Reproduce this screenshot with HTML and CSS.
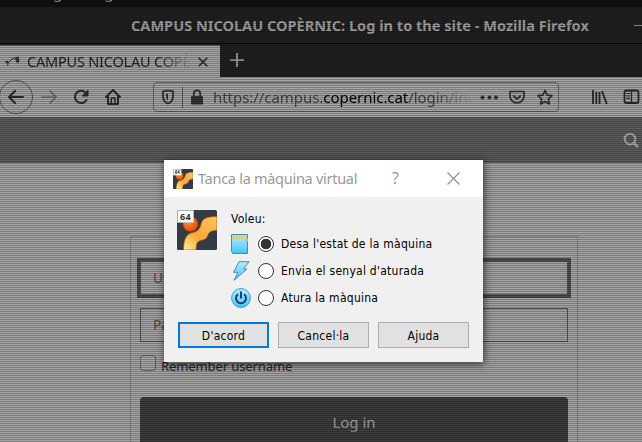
FILE: index.html
```html
<!DOCTYPE html>
<html lang="ca">
<head>
<meta charset="utf-8">
<title>Tanca la màquina virtual</title>
<link rel="stylesheet" href="styles.css">
</head>
<body>
<svg width="0" height="0" class="defs">
  <defs>
    <linearGradient id="orange" x1="0" y1="1" x2="1" y2="0"><stop offset="0" stop-color="#fff0a0"/><stop offset=".4" stop-color="#f9a836"/><stop offset="1" stop-color="#ffc45c"/></linearGradient>
    <radialGradient id="ball" cx=".4" cy=".35" r=".7"><stop offset="0" stop-color="#ff9238"/><stop offset="1" stop-color="#e34400"/></radialGradient>
    <linearGradient id="sky" x1="0" y1="0" x2="0" y2="1"><stop offset="0" stop-color="#b5ecff"/><stop offset="1" stop-color="#4cc4fb"/></linearGradient>
    <symbol id="vm" viewBox="0 0 40 40">
      <rect width="40" height="40" rx="1.5" fill="#353a45"/>
      <circle cx="13.5" cy="14" r="7.5" fill="url(#ball)"/>
      <path d="M6.500 40C6.500 34 7.500 28 11 24.500C14 22 18 23 21 20C25 16 23 12 27 9C30 7 35 6.500 40 6.500V20.500C36 20.500 33 21 31.500 24C30 27 30 29 26 30C22 30.500 20 32 19.500 35C19 37 19.500 38.500 19 40Z" fill="url(#orange)" stroke="#9a4a10" stroke-width=".7"/>
      <rect x=".5" y=".5" width="16" height="12" fill="#fff" stroke="#bbb" stroke-width=".6"/>
      <text x="8.5" y="10" class="bits" text-anchor="middle">64</text>
    </symbol>
  </defs>
</svg>
<div class="screen">
  <div class="topbar"><span>g</span><span>g</span></div>
  <div class="titlebar"><span class="wintitle">CAMPUS NICOLAU COPÈRNIC: Log in to the site - Mozilla Firefox</span><i class="minimize"></i></div>
  <div class="tabs">
    <div class="tab">
      <svg class="favicon" width="18" height="16" viewBox="0 0 18 16" fill="none" stroke="#2c2c2c"><path d="M2 8Q4 6 4 9T3 12M4 9Q7 4 14 3" /><path d="M12 4Q13 9 14 8T14 3" stroke-width="1.6"/><path d="M2 7L3 9" stroke-width="2"/></svg>
      <span class="tabtitle">CAMPUS NICOLAU COPÈ</span>
      <svg class="tabclose" width="10" height="10" viewBox="0 0 10 10" stroke="#2b2b2b" stroke-width="1.6"><path d="M.7.7 9.3 9.3M9.3.7.7 9.3"/></svg>
    </div>
    <svg class="newtab" width="14" height="14" viewBox="0 0 14 14" stroke="#aaa" stroke-width="1.7"><path d="M7 0V14M0 7H14"/></svg>
  </div>
  <div class="toolbar">
    <svg class="navicons" width="130" height="40" viewBox="0 0 130 40" fill="none" stroke="#2b2b2b" stroke-width="2" stroke-linejoin="round" stroke-linecap="round">
      <circle cx="16" cy="20" r="16.5" stroke="#555" stroke-width="1"/>
      <path d="M23 20H9M15 14L9 20L15 26"/>
      <path d="M42 20H56M50 14L56 20L50 26" stroke="#6b6b6b" stroke-width="1.7"/>
      <path d="M86 16A6.2 6.2 0 1 0 86.5 23"/><path d="M88 13.5V19H82.5Z" fill="#2b2b2b" stroke-width="1"/>
      <path d="M106 20L113 13L120 20M108 19V27H118V19" stroke-width="2"/><path d="M111.3 27V21H115V27" stroke-width="1.5"/>
    </svg>
    <div class="urlbar">
      <svg width="60" height="28" viewBox="0 0 60 28" fill="none" stroke="#333" stroke-width="1.8">
        <path d="M9 8.3Q14 7 19 8.3V13Q19 19 14 20.5Q9 19 9 13Z" stroke-linejoin="round"/><path d="M14 10.5Q12 10.5 12 11V13Q12 16 14 17.5Z" fill="#333" stroke="none"/>
        <path d="M28.5 4V25" stroke="#555" stroke-width="1"/>
        <rect x="37" y="13" width="12" height="8.5" rx="1" fill="#333" stroke="none"/><path d="M39.8 13V10.5A3.2 3.2 0 0 1 46.2 10.5V13"/>
      </svg>
      <span class="url"><span class="sub">https://campus.</span><span class="host">copernic.cat</span><span class="path">/login/inc</span></span>
      <svg class="urlactions" width="76" height="28" viewBox="0 0 76 28" fill="none" stroke="#333" stroke-width="1.7" stroke-linejoin="round" stroke-linecap="round">
        <g fill="#333" stroke="none"><circle cx="2.5" cy="14.5" r="2"/><circle cx="9.5" cy="14.5" r="2"/><circle cx="16" cy="14.5" r="2"/></g>
        <path d="M30 8.500H44V13A7 7 0 0 1 30 13ZM33.700 13L37 16L40.300 13"/>
        <path d="M65 7.500L67.100 12.200L72 12.700L68.400 16.100L69.400 21L65 18.500L60.600 21L61.600 16.100L58 12.700L62.900 12.200Z"/>
      </svg>
    </div>
    <svg class="sideicons" width="50" height="40" viewBox="0 0 50 40" fill="none" stroke="#2b2b2b" stroke-width="1.8">
      <path d="M1 13V27M4.300 15V27M7.500 15V27M10 14L14.800 27"/>
      <rect x="32.500" y="13.500" width="14" height="12.500" rx="2"/><path d="M39.500 14V26" stroke-width="1.3"/><path d="M34.500 16.500H38M34.500 19H38M34.500 21.500H38" stroke-width="1"/>
    </svg>
  </div>
  <div class="siteheader">
    <svg width="17" height="17" viewBox="0 0 17 17" fill="none" stroke="#aaa" stroke-width="2"><circle cx="7" cy="7" r="5.300"/><path d="M11 11L15 15" stroke-width="2.500"/></svg>
  </div>
  <div class="content">
    <div class="login">
      <div class="field focused">Username</div>
      <div class="field">Password</div>
      <div class="remember"><i class="check"></i><span>Remember username</span></div>
      <div class="submit">Log in</div>
    </div>
  </div>
</div>
<div class="scanlines"></div>
<div class="dialog">
  <div class="dialogbar">
    <svg width="20" height="20"><use href="#vm"/></svg>
    <span class="dialogtitle">Tanca la màquina virtual</span>
    <span class="help">?</span>
    <svg class="close" width="13" height="13" viewBox="0 0 13 13" stroke="#8f8f8f" stroke-width="1.100"><path d="M.5.500 12.500 12.500M12.500.500.500 12.500"/></svg>
  </div>
  <div class="dialogbody">
    <div class="question">
      <svg width="40" height="40"><use href="#vm"/></svg>
      <div class="choices">
        <div class="prompt">Voleu:</div>
        <div class="choice">
          <svg width="20" height="20" viewBox="0 0 20 20"><path d="M.5.500H16.500V4.500L15.500 6L16.500 8V19.500H1.500L.5 17Z" fill="url(#sky)" stroke="#3990bd"/><path d="M1.500 3H16" stroke="#f5c64f" stroke-width="4" stroke-dasharray="2 1"/></svg>
          <i class="radio on"></i><span class="desa">Desa l'estat de la màquina</span>
        </div>
        <div class="choice">
          <svg width="20" height="20" viewBox="0 0 20 20"><path d="M8 .700H18L12.500 8H16L3 19.300L7 11.300H2.500Z" fill="url(#sky)" stroke="#3c8fc0" stroke-linejoin="round"/></svg>
          <i class="radio"></i><span class="envia">Envia el senyal d'aturada</span>
        </div>
        <div class="choice">
          <svg width="20" height="20" viewBox="0 0 20 20" fill="none"><circle cx="10" cy="10" r="9.400" fill="url(#sky)" stroke="#3b9acb"/><path d="M7 6.200A5 5 0 1 0 13 6.200M10 3.500V10.500" stroke="#14416b" stroke-width="2"/></svg>
          <i class="radio"></i><span class="atura">Atura la màquina</span>
        </div>
      </div>
    </div>
    <div class="buttons"><div class="button default">D'acord</div><div class="button">Cancel·la</div><div class="button">Ajuda</div></div>
  </div>
</div>
</body>
</html>
```
FILE: styles.css
```css
* { box-sizing: border-box; }
body { margin: 0; width: 642px; height: 442px; overflow: hidden; position: relative; font-family: "Noto Sans", sans-serif; }
svg { display: block; flex: none; }
.defs { position: absolute; }
.bits { font: bold 9px "Noto Sans", sans-serif; fill: #333; }
.screen { width: 642px; height: 442px; display: flex; flex-direction: column; overflow: hidden; background: #a4a4a4; }
.topbar { height: 7px; flex: none; overflow: hidden; background: #101010; color: #999; font-size: 15px; line-height: 1px; display: flex; gap: 42px; padding-left: 53px; }
.topbar span { margin-top: -8px; }
.titlebar { height: 37px; flex: none; background: #202020; border-bottom: 1px solid #0a0a0a; display: flex; align-items: center; padding-left: 131px; }
.wintitle { width: 460px; font-size: 14.5px; font-weight: 700; letter-spacing: .03px; color: #a2a2a2; white-space: nowrap; }
.minimize { width: 8px; height: 1px; background: #aaa; margin-left: auto; }
.tabs { height: 33px; flex: none; display: flex; background: #202020; }
.tab { width: 220px; height: 32px; margin-top: 1px; padding-left: 4px; display: flex; align-items: center; background: #a4a4a4; border-top: 1px solid #666; }
.tabtitle { width: 165px; margin-left: 5px; padding-bottom: 1px; overflow: hidden; white-space: nowrap; font-size: 14.5px; letter-spacing: -.2px; color: #222; -webkit-mask-image: linear-gradient(90deg, #000 78%, transparent 100%); mask-image: linear-gradient(90deg, #000 78%, transparent 100%); }
.tabclose { margin-left: 6px; }
.newtab { margin: 9px 0 0 10px; }
.toolbar { height: 40px; flex: none; display: flex; align-items: center; background: #a4a4a4; }
.urlbar { width: 407px; height: 30px; margin-left: 23px; border: 1px solid #666; border-radius: 4px; display: flex; align-items: center; }
.url { width: 259px; margin-left: -1px; overflow: hidden; white-space: nowrap; font-size: 15px; letter-spacing: -.05px; color: #444; -webkit-mask-image: linear-gradient(90deg, #000 85%, transparent 100%); mask-image: linear-gradient(90deg, #000 85%, transparent 100%); }
.host { color: #000; }
.urlactions { margin-left: 8px; }
.sideicons { margin-left: 33px; }
.siteheader { height: 46px; flex: none; background: #5c5c5c; display: flex; justify-content: flex-end; padding: 15px 2px 0 0; }
.content { flex: 1; padding: 73px 64px 0 130px; }
.login { height: 300px; border: 1px solid #838383; padding: 24px 9px 0; }
.field { height: 34px; border: 1px solid #555; padding-left: 12px; font-size: 13.5px; line-height: 33px; color: #505050; }
.field.focused { margin-bottom: 13px; outline: 3px solid #4d4d4d; }
.remember { display: flex; height: 28px; margin-top: 13px; font-size: 13px; letter-spacing: -.1px; color: #262626; }
.check { width: 16px; height: 16px; border: 1px solid #666; border-radius: 3px; margin-right: 5px; }
.remember span { line-height: 22px; }
.submit { height: 52px; margin-top: 14px; background: #3c3c3c; border-radius: 4px; color: #a4a4a4; text-align: center; font-size: 15px; line-height: 50px; }
.scanlines { position: absolute; inset: 0; background: repeating-linear-gradient(180deg, transparent 0 1px, rgba(0,0,0,.25) 1px 2px); }
.dialog { position: absolute; left: 164px; top: 160px; width: 319px; height: 202px; background: #f0f0f0; box-shadow: 1px 2px 8px rgba(0,0,0,.65); }
.dialogbar { height: 37px; background: #fff; display: flex; align-items: center; padding-left: 9px; color: #999; }
.dialogtitle { width: 160px; margin-left: 5px; font-size: 14.5px; letter-spacing: -.28px; white-space: nowrap; padding-bottom: 2px; }
.help { width: 12px; margin-left: 34px; font-size: 16px; padding-bottom: 2px; }
.close { margin-left: 43px; }
.dialogbody { padding: 13px 14px 0 13px; font: 12px/15px "DejaVu Sans Condensed", "DejaVu Sans", sans-serif; font-stretch: condensed; letter-spacing: .26px; color: #000; }
.question { display: flex; gap: 14px; height: 112px; }
.prompt { height: 20px; line-height: 18px; }
.choice { height: 27px; display: flex; align-items: center; white-space: nowrap; }
.choice span { padding-top: 1px; }
.radio { width: 16px; height: 16px; border: 1px solid #333; border-radius: 50%; background: #fff; margin: 0 7px; }
.radio.on { background: radial-gradient(circle, #333 0 5px, #fff 5.600px); }
.buttons { display: flex; gap: 9px; padding-left: 1px; }
.button { width: 91px; height: 26px; border: 1px solid #adadad; background: #e1e1e1; text-align: center; line-height: 26px; }
.button.default { border: 2px solid #0078d7; line-height: 24px; }
```
